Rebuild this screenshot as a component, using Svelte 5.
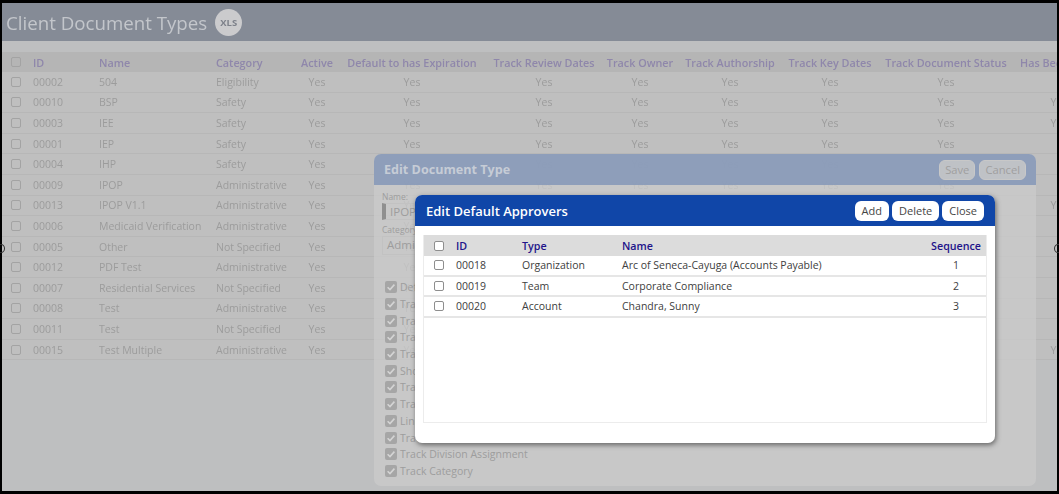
<script>
  const cols = ['Active', 'Default to has Expiration', 'Track Review Dates', 'Track Owner', 'Track Authorship', 'Track Key Dates', 'Track Document Status', 'Has Been Used']

  const types = [
    ['00002', '504', 'Eligibility', false],
    ['00010', 'BSP', 'Safety', true],
    ['00003', 'IEE', 'Safety', true],
    ['00001', 'IEP', 'Safety', false],
    ['00004', 'IHP', 'Safety', false],
    ['00009', 'IPOP', 'Administrative', false],
    ['00013', 'IPOP V1.1', 'Administrative', true],
    ['00006', 'Medicaid Verification', 'Administrative', false],
    ['00005', 'Other', 'Not Specified', false],
    ['00012', 'PDF Test', 'Administrative', false],
    ['00007', 'Residential Services', 'Not Specified', false],
    ['00008', 'Test', 'Administrative', false],
    ['00011', 'Test', 'Not Specified', false],
    ['00015', 'Test Multiple', 'Administrative', true],
  ]

  const flags = [
    'Default to has Expiration', 'Track Review Dates', 'Track Owner', 'Track Authorship', 'Track Key Dates',
    'Show in Portal', 'Track Document Status', 'Track Location', 'Link to Service', 'Track Team',
    'Track Division Assignment', 'Track Category',
  ]

  const approvers = [
    ['00018', 'Organization', 'Arc of Seneca-Cayuga (Accounts Payable)', 1],
    ['00019', 'Team', 'Corporate Compliance', 2],
    ['00020', 'Account', 'Chandra, Sunny', 3],
  ]
</script>

<div class="frame">
  <div class="page">
    <header class="page-head">
      <h1>Client Document Types</h1>
      <span class="xls">XLS</span>
    </header>

    <div class="grid">
      <div class="row head">
        <span class="cell"><span class="box"></span></span>
        <span class="cell">ID</span>
        <span class="cell">Name</span>
        <span class="cell">Category</span>
        {#each cols as c}
          <span class="cell mid">{c}</span>
        {/each}
      </div>
      {#each types as t}
        <div class="row">
          <span class="cell"><span class="box"></span></span>
          <span class="cell">{t[0]}</span>
          <span class="cell">{t[1]}</span>
          <span class="cell">{t[2]}</span>
          {#each cols as c, i}
            <span class="cell mid">{i < 7 || t[3] ? 'Yes' : ''}</span>
          {/each}
        </div>
      {/each}
    </div>
  </div>

  <section class="doc-modal">
    <div class="doc-head">
      <h2>Edit Document Type</h2>
      <div class="doc-actions">
        <button>Save</button>
        <button>Cancel</button>
      </div>
    </div>
    <div class="doc-body">
      <label class="fld-label" for="doc-name">Name:</label>
      <div id="doc-name" class="input required">IPOP</div>
      <label class="fld-label" for="doc-cat">Category:</label>
      <div id="doc-cat" class="input select">Administrative</div>
      <ul class="flags">
        {#each flags as f}
          <li>
            <span class="tick">
              <svg viewBox="0 0 12 12" width="12" height="12"><path d="M2.6 6.2 5 8.6 9.4 3.6" fill="none" stroke="#d4d4d4" stroke-width="1.6"/></svg>
            </span>
            {f}
          </li>
        {/each}
      </ul>
    </div>
  </section>

  <section class="app-modal">
    <div class="app-head">
      <h2>Edit Default Approvers</h2>
      <div class="app-actions">
        <button>Add</button>
        <button>Delete</button>
        <button>Close</button>
      </div>
    </div>
    <div class="app-table">
      <div class="app-row app-title">
        <span><span class="box light"></span></span>
        <span>ID</span>
        <span>Type</span>
        <span>Name</span>
        <span class="seq-head">Sequence</span>
      </div>
      {#each approvers as a}
        <div class="app-row">
          <span><span class="box light"></span></span>
          <span>{a[0]}</span>
          <span>{a[1]}</span>
          <span>{a[2]}</span>
          <span class="seq">{a[3]}</span>
        </div>
      {/each}
    </div>
  </section>

  <!-- stray handles of the cropped capture -->
  <span class="handle left"></span>
  <span class="handle right"></span>
</div>

<style>
  :global(body) {
    margin: 0;
    background: #000;
  }

  .frame {
    position: relative;
    width: 1059px;
    height: 494px;
    box-sizing: border-box;
    padding: 3px 2px 3px 2px;
    overflow: hidden;
    background: #000;
    font-family: "Open Sans", sans-serif;
    font-size: 10.5px;
  }

  .page {
    height: 100%;
    overflow: hidden;
    background: #bebfc0;
    color: #9c9c9c;
    filter: blur(0.3px);
  }

  .page-head {
    display: flex;
    align-items: center;
    gap: 8px;
    height: 38px;
    padding-left: 4px;
    background: #858b96;
  }

  h1 {
    margin: 0;
    font-size: 18.7px;
    font-weight: 400;
    color: #c3c6cb;
  }

  .xls {
    width: 27px;
    height: 27px;
    border-radius: 50%;
    background: #cbcbcd;
    color: #7d818a;
    font-size: 9.5px;
    font-weight: 700;
    line-height: 27px;
    text-align: center;
  }

  .grid {
    margin-top: 11px;
    width: 1100px;
    background: #bfbfbf;
  }

  .row {
    display: grid;
    grid-template-columns: 31px 66px 117px 76px 50px 140px 124px 68px 112px 88px 144px 82px;
    height: 20.6px;
    align-items: center;
    border-bottom: 1px solid #b7b7b7;
    box-sizing: border-box;
  }

  .row.head {
    height: 20px;
    background: #b5b5b5;
    color: #8f87ab;
    font-size: 10.8px;
    font-weight: 600;
    border: none;
  }

  .cell {
    white-space: nowrap;
  }

  .cell.mid {
    text-align: center;
  }

  .box {
    display: block;
    width: 8px;
    height: 8px;
    margin-left: 9px;
    border: 1px solid #a3a3a3;
    border-radius: 2px;
  }

  .box.light {
    margin-left: 10px;
    border-color: #8e8e8e;
    background: #fff;
  }

  .doc-modal {
    position: absolute;
    left: 374px;
    top: 154px;
    width: 662px;
    height: 332px;
    border-radius: 7px;
    overflow: hidden;
    color: #9d9d9d;
    background: rgba(203, 203, 203, 0.78);
  }

  .doc-head {
    display: flex;
    align-items: center;
    justify-content: space-between;
    height: 31px;
    padding: 0 10px;
    background: rgba(132, 151, 183, 0.85);
  }

  .doc-head h2 {
    margin: 0;
    font-size: 12.6px;
    font-weight: 700;
    color: #c6ccd6;
  }

  .doc-actions {
    display: flex;
    gap: 4px;
  }

  .doc-actions button {
    height: 20px;
    padding: 0 5px;
    border: 1px solid #c8c8c8;
    border-radius: 6px;
    background: rgba(200, 200, 200, 0.85);
    color: #9f9f9f;
    font: inherit;
    font-size: 11.2px;
  }

  .doc-body {
    padding: 6px 8px;
  }

  .fld-label {
    display: block;
    font-size: 8.5px;
    line-height: 12px;
  }

  .input {
    width: 200px;
    height: 17px;
    margin-bottom: 4px;
    padding-left: 4px;
    font-size: 11.5px;
    line-height: 15px;
    box-sizing: border-box;
    border: 1px solid #c2c2c2;
  }

  .input.required {
    border-left: 4px solid #8f8f8f;
  }

  .input.select {
    height: 19px;
    padding-left: 4px;
  }

  .flags {
    margin: 24px 0 0 3px;
    padding: 0;
    list-style: none;
  }

  .flags li {
    display: flex;
    align-items: center;
    gap: 3px;
    height: 16.7px;
  }

  .tick {
    width: 12px;
    height: 12px;
    border-radius: 2px;
    background: #a6a6a6;
  }

  .tick svg {
    display: block;
  }

  .app-modal {
    position: absolute;
    left: 415px;
    top: 195px;
    width: 580px;
    height: 248px;
    border-radius: 7px;
    overflow: hidden;
    background: #fff;
    box-shadow: 1px 2px 5px rgba(60, 60, 60, 0.7);
    color: #404040;
    font-size: 10.5px;
  }

  .app-head {
    display: flex;
    align-items: center;
    justify-content: space-between;
    height: 31px;
    padding: 0 11px;
    background: #1046a8;
  }

  .app-head h2 {
    margin: 0;
    font-size: 13px;
    font-weight: 600;
    color: #fff;
  }

  .app-actions {
    display: flex;
    gap: 3px;
  }

  .app-actions button {
    height: 20px;
    padding: 0 7px;
    border: none;
    border-radius: 6px;
    background: #fff;
    color: #454545;
    font: inherit;
    font-size: 11px;
  }

  .app-table {
    height: 187px;
    margin: 9px 8px 0;
    border: 1px solid #ececec;
    border-top: none;
  }

  .app-row {
    display: grid;
    grid-template-columns: 32px 66px 100px 286px 1fr;
    align-items: center;
    height: 20.5px;
    border-bottom: 2px solid #e6e6e6;
    box-sizing: border-box;
  }

  .app-title {
    height: 21px;
    background: #dcdcdc;
    border: none;
    color: #22138a;
    font-size: 10.7px;
    font-weight: 600;
  }

  .seq-head {
    padding-right: 5px;
    text-align: right;
  }

  .seq {
    padding-left: 18px;
    text-align: center;
  }

  .handle {
    position: absolute;
    top: 244px;
    width: 6px;
    height: 7px;
    border: 1px solid #333;
    border-radius: 50%;
  }

  .handle.left {
    left: -3px;
  }

  .handle.right {
    right: -3px;
  }
</style>
